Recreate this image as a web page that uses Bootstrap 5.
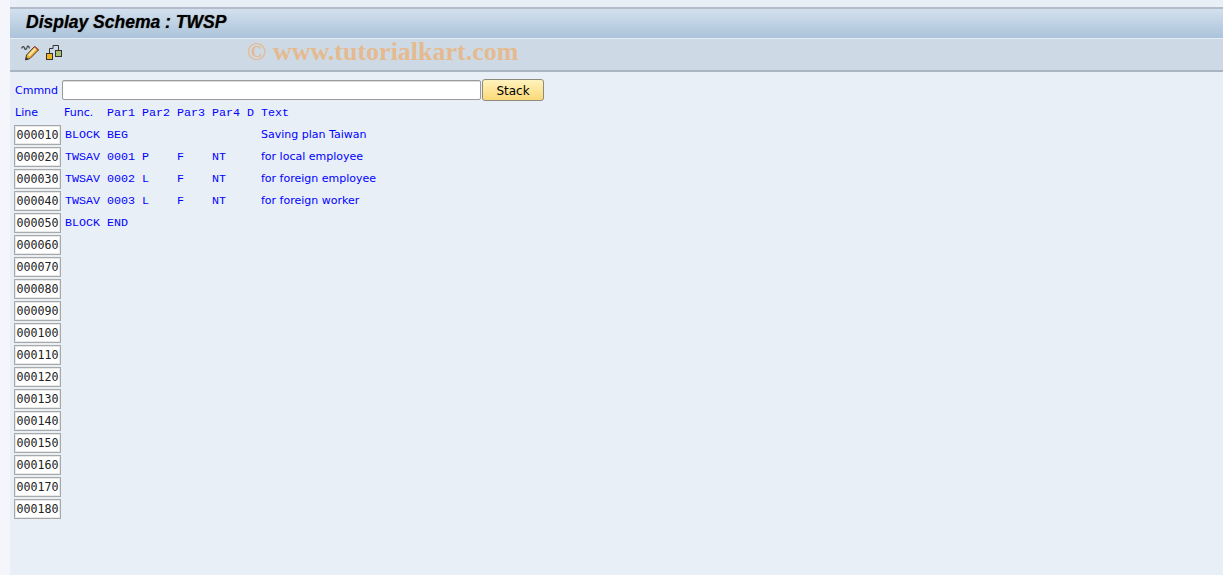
<!DOCTYPE html>
<html lang="en">
<head>
<meta charset="utf-8">
<title>Display Schema : TWSP</title>
<link href="https://cdn.jsdelivr.net/npm/bootstrap@5.3.0/dist/css/bootstrap.min.css" rel="stylesheet">
<style>
html,body{height:575px;overflow:hidden}
body{background:#f4f6fb;font-family:"DejaVu Sans",sans-serif;font-size:11px;color:#00f}
.sap-app{margin-left:10px;height:575px;padding-top:7px;background:#e8eff7}
.sap-title{height:31px;border-top:2px solid #b4bccb;background:linear-gradient(#d3e0ee,#abc3da);padding-left:16px;font:italic 700 17.5px/26px "Liberation Sans",sans-serif;color:#000;text-shadow:0 0 1px #555}
.sap-tools{height:34px;border-top:1px solid #e6eef5;border-bottom:2px solid #aab5c4;background:#cddae5;padding-left:11px;padding-bottom:5px;gap:6px}
.sap-mark{margin-left:178px;font:700 26px/1 "Liberation Serif",serif;color:#e5ba90;white-space:nowrap}
.sap-cmd{height:22px;margin-top:7px;padding-left:5px}
.sap-cmd-label{width:47px;line-height:22px;padding-top:1px}
.sap-input{width:419px;height:20px;background:#fff;border:1px solid #9a9a9a;box-shadow:inset 0 1px 0 #ddd;border-radius:2px}
.sap-btn{width:62px;height:22px;margin-left:1px;padding:1px 0 0;font:12px/20px "DejaVu Sans",sans-serif;color:#000;background:linear-gradient(#fff3bd,#fbd978);border:1px solid #8c8c7c;border-radius:3px}
.sap-head,.sap-row{display:flex;height:22px;align-items:center;white-space:pre}
.sap-head{height:21px;padding-left:5px;padding-top:2px;margin-top:1px}
.sap-mono{font:11.67px/1 "Liberation Mono",monospace}
.sap-row{padding-left:4px;padding-top:1px}
.sap-row span{margin-top:2px}
.sap-num{width:47px;height:20px;margin-right:4px;background:#fff;border:1px solid #a8a8a8;box-shadow:inset 0 0 0 1px #e8e8e8;color:#222;font:11.67px/18px "DejaVu Sans Mono",monospace;text-align:center}
.c-line{width:49px}
.c-func{width:43px}
.c-p{width:35px}
.c-d{width:14px}
.c-code{width:42px}
.c-txt{margin-left:14px}
</style>
</head>
<body>
<div class="sap-app">
  <div class="sap-title">Display Schema : TWSP</div>
  <div class="sap-tools d-flex align-items-center">
    <svg width="18" height="17" viewBox="0 0 18 17" aria-label="Change"><path d="M.5 4.500C1.500 2 3 2 3.500 4S5.500 6 6 3.500 8 2 8.500 4.500" fill="none" stroke="#444" stroke-width="1.200"/><path d="M4.500 16l1-5 8-8.500 4 3.500-8.500 8.500z" fill="#f3a92c" stroke="#3f3f3f"/><path d="M7 11l7-7.500 1.500 1.500-7 7.500z" fill="#fde7a8"/><path d="M13.500 2.500l4 3.500" stroke="#b8463a" stroke-width="1.500"/><path d="M4.500 16l.6-3 2.400 2.200z" fill="#333"/></svg>
    <svg width="18" height="17" viewBox="0 0 18 17" aria-label="Hierarchy"><rect x="1.500" y="9.500" width="6" height="6" fill="#f2b21c" stroke="#333"/><rect x="10.500" y="6.500" width="6" height="6" fill="#a8bd6a" stroke="#333"/><path d="M4.500 9V4.500h3.500V1.500h5.500v5" fill="none" stroke="#333"/></svg>
    <div class="sap-mark">© www.tutorialkart.com</div>
  </div>
  <div class="sap-cmd d-flex align-items-center">
    <div class="sap-cmd-label">Cmmnd</div>
    <div class="sap-input"></div>
    <button class="btn sap-btn" type="button">Stack</button>
  </div>
  <div class="sap-head">
    <span class="c-line">Line</span><span class="c-func">Func.</span><span class="sap-mono c-p">Par1</span><span class="sap-mono c-p">Par2</span><span class="sap-mono c-p">Par3</span><span class="sap-mono c-p">Par4</span><span class="sap-mono c-d">D</span><span class="sap-mono">Text</span>
  </div>
  <div class="sap-row"><div class="sap-num">000010</div><span class="sap-mono c-code">BLOCK</span><span class="sap-mono c-p">BEG</span><span class="c-p"></span><span class="c-p"></span><span class="c-p"></span><span class="c-txt">Saving plan Taiwan</span></div>
  <div class="sap-row"><div class="sap-num">000020</div><span class="sap-mono c-code">TWSAV</span><span class="sap-mono c-p">0001</span><span class="sap-mono c-p">P</span><span class="sap-mono c-p">F</span><span class="sap-mono c-p">NT</span><span class="c-txt">for local employee</span></div>
  <div class="sap-row"><div class="sap-num">000030</div><span class="sap-mono c-code">TWSAV</span><span class="sap-mono c-p">0002</span><span class="sap-mono c-p">L</span><span class="sap-mono c-p">F</span><span class="sap-mono c-p">NT</span><span class="c-txt">for foreign employee</span></div>
  <div class="sap-row"><div class="sap-num">000040</div><span class="sap-mono c-code">TWSAV</span><span class="sap-mono c-p">0003</span><span class="sap-mono c-p">L</span><span class="sap-mono c-p">F</span><span class="sap-mono c-p">NT</span><span class="c-txt">for foreign worker</span></div>
  <div class="sap-row"><div class="sap-num">000050</div><span class="sap-mono c-code">BLOCK</span><span class="sap-mono c-p">END</span></div>
  <div class="sap-row"><div class="sap-num">000060</div></div>
  <div class="sap-row"><div class="sap-num">000070</div></div>
  <div class="sap-row"><div class="sap-num">000080</div></div>
  <div class="sap-row"><div class="sap-num">000090</div></div>
  <div class="sap-row"><div class="sap-num">000100</div></div>
  <div class="sap-row"><div class="sap-num">000110</div></div>
  <div class="sap-row"><div class="sap-num">000120</div></div>
  <div class="sap-row"><div class="sap-num">000130</div></div>
  <div class="sap-row"><div class="sap-num">000140</div></div>
  <div class="sap-row"><div class="sap-num">000150</div></div>
  <div class="sap-row"><div class="sap-num">000160</div></div>
  <div class="sap-row"><div class="sap-num">000170</div></div>
  <div class="sap-row"><div class="sap-num">000180</div></div>
</div>
<script src="https://cdn.jsdelivr.net/npm/bootstrap@5.3.0/dist/js/bootstrap.bundle.min.js"></script>
</body>
</html>
